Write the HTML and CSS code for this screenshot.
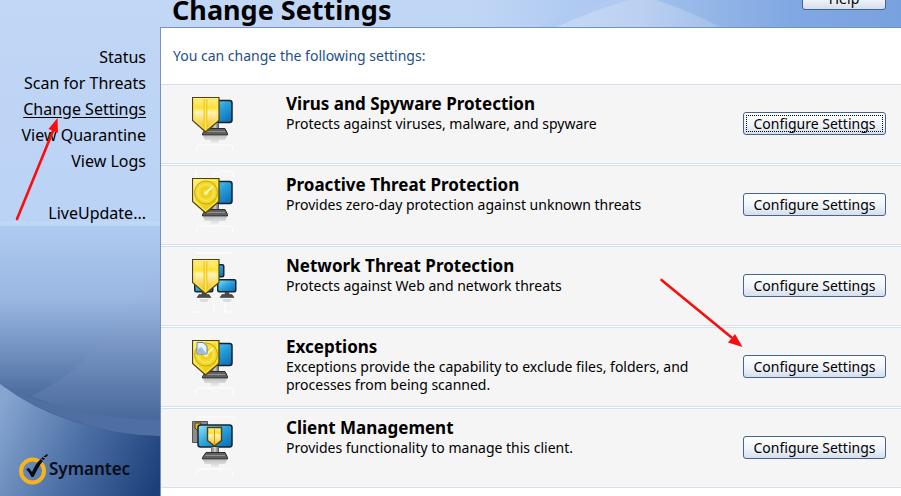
FILE: index.html
```html
<!DOCTYPE html>
<html lang="en">
<head>
<meta charset="utf-8">
<title>Change Settings</title>
<link rel="stylesheet" href="styles.css">
</head>
<body>
<svg class="defs" aria-hidden="true">
  <defs>
    <linearGradient id="gold" x1="0" y1="0" x2="1" y2="1"><stop offset="0" stop-color="#fff3a0"/><stop offset=".45" stop-color="#f6dc2c"/><stop offset="1" stop-color="#e5b800"/></linearGradient>
    <linearGradient id="goldV" x1="0" y1="0" x2="0" y2="1"><stop offset="0" stop-color="#fff0a0"/><stop offset=".3" stop-color="#ffe030"/><stop offset=".42" stop-color="#fff4b8"/><stop offset="1" stop-color="#f0b800"/></linearGradient>
    <linearGradient id="screen" x1="0" y1="0" x2="1" y2="1"><stop offset="0" stop-color="#8fe6fa"/><stop offset=".5" stop-color="#2aa0dc"/><stop offset="1" stop-color="#0968b4"/></linearGradient>
    <linearGradient id="metal" x1="0" y1="0" x2="1" y2="0"><stop offset="0" stop-color="#6c6c6c"/><stop offset=".5" stop-color="#d4d4d4"/><stop offset="1" stop-color="#555"/></linearGradient>
    <linearGradient id="shade" x1="0" y1="0" x2="0" y2="1"><stop offset="0" stop-color="#a0a0a0"/><stop offset="1" stop-color="#f5f5f5"/></linearGradient>
    <g id="stand">
      <path d="M19 33h8v8h-8z" fill="url(#metal)"/>
      <path d="M14 38.500h19l2.500 5v1.500H10.500v-1.500z" fill="#606060" stroke="#2b2b2b"/>
      <path d="M13 41.500h20" stroke="#929292"/>
      <path d="M11 46h24l-2 4h-6v4h-8v-4h-6z" fill="url(#shade)" opacity=".6"/>
      <path d="M4.500 61v-3q0-3 3-3h30q3 0 3 3v3" fill="none" stroke="#fff"/>
    </g>
    <g id="monitor">
      <rect x="10" y="10.500" width="30" height="22" rx="2.500" fill="url(#screen)" stroke="#17232c" stroke-width="1.500"/>
      <use href="#stand"/>
    </g>
    <path id="shield" d="M.5 7.500h26.500v23L13.500 42 .5 30.500z"/>
    <g id="plate">
      <use href="#shield" fill="url(#gold)" stroke="#4b4210" stroke-width="1.200"/>
      <path d="M2.500 9.500h22.500v20.500L13.500 39.500 2.500 30z" fill="none" stroke="#fff06c"/>
    </g>
    <g id="split">
      <use href="#shield" fill="url(#goldV)" stroke="#4b4210" stroke-width="1.200"/>
      <path d="M2.500 9.500H25v20L13.500 39.500l-11-9.500z" fill="none" stroke="#ffe84a"/>
      <path d="M13.500 9v30" stroke="#e6b80c" stroke-width="3.600"/>
      <path d="M13.500 9v30" stroke="#ffe95a" stroke-width="2"/>
    </g>
    <g id="rings" fill="none">
      <circle cx="14" cy="21.500" r="11.500" fill="#f4d829" stroke="#c9a40c"/>
      <circle cx="14" cy="21.500" r="8" stroke="#fbe660" stroke-width="1.200"/>
      <circle cx="14" cy="21.500" r="4.500" stroke="#e6c326" stroke-width="1.200"/>
      <path d="M14 22l7-7" stroke="#fffbd0" stroke-width="1.600"/>
      <circle cx="14" cy="22" r="1.800" fill="#fff8b0"/>
    </g>
    <g id="node">
      <rect x=".75" y=".75" width="18" height="12" rx="1.500" fill="url(#screen)" stroke="#17232c" stroke-width="1.500"/>
      <path d="M8 13.500h4v2h3l2 3H3l2-3h3z" fill="#4b4b4b" stroke="#2b2b2b" stroke-width=".5"/>
      <path d="M5 20h10l-2 3H7z" fill="#ccc" opacity=".6"/>
    </g>
  </defs>
</svg>

<div class="app">
  <nav class="sidebar" aria-label="Main">
    <svg class="backdrop" viewBox="0 0 160 496" preserveAspectRatio="none" aria-hidden="true">
      <defs>
        <linearGradient id="skyTop" x1="0" y1="0" x2="0" y2="1"><stop offset="0" stop-color="#c2d7f5"/><stop offset=".5" stop-color="#bed4f5"/><stop offset="1" stop-color="#bad3f6"/></linearGradient>
        <linearGradient id="sky" gradientUnits="userSpaceOnUse" x1="0" y1="225" x2="0" y2="400"><stop offset="0" stop-color="#afcbf0"/><stop offset=".42" stop-color="#9ab7e2"/><stop offset=".75" stop-color="#6e8dbd"/><stop offset="1" stop-color="#48689d"/></linearGradient>
        <linearGradient id="skyRight" gradientUnits="userSpaceOnUse" x1="0" y1="225" x2="0" y2="425"><stop offset="0" stop-color="#b0ccf2"/><stop offset=".36" stop-color="#9ab6e1"/><stop offset=".7" stop-color="#6b89b9"/><stop offset="1" stop-color="#456599"/></linearGradient>
        <linearGradient id="hill" gradientUnits="userSpaceOnUse" x1="0" y1="410" x2="160" y2="480"><stop offset="0" stop-color="#86a5d0"/><stop offset=".5" stop-color="#4b6fa5"/><stop offset="1" stop-color="#1c3f79"/></linearGradient>
      </defs>
      <path d="M0 0h160v226H0z" fill="url(#skyTop)"/>
      <path d="M0 221h160v5H0z" fill="#c0d8f8"/>
      <path d="M0 226h160v270H0z" fill="url(#sky)"/>
      <path d="M160 265C128 310 88 372 31 396q60 25 129 28z" fill="url(#skyRight)"/>
      <path d="M0 384q70 35 160 36v18Q60 428 0 384z" fill="#4f6fa2"/>
      <path d="M0 384q65 49 160 52v60H0z" fill="url(#hill)"/>
    </svg>
    <ul class="menu">
      <li><a href="#">Status</a></li>
      <li><a href="#">Scan for Threats</a></li>
      <li><a class="current" href="#" aria-current="page">Change Settings</a></li>
      <li><a href="#">View Quarantine</a></li>
      <li><a href="#">View Logs</a></li>
      <li class="update"><a href="#">LiveUpdate...</a></li>
    </ul>
    <div class="brand">
      <svg width="30" height="34" viewBox="0 0 30 34" aria-hidden="true">
        <circle cx="13.500" cy="19" r="11.500" fill="none" stroke="#f9b31c" stroke-width="4"/>
        <path d="M7 17l3-1 3 4Q18 8 28 2l1 1Q21 11 14.500 25h-2Q10 20 7 17z" fill="#080c12"/>
        <path d="M22 7l3 2M24 5l3 1" stroke="#9bb0cc" stroke-width=".8"/>
      </svg>
      <span class="brand-name">Symantec</span><span class="brand-dot">.</span>
    </div>
    <svg class="arrow arrow-menu" width="46" height="106" viewBox="0 0 46 106" aria-hidden="true">
      <path d="M3 103L39 15" stroke="#fa0d0d" stroke-width="2.600" stroke-linecap="round"/>
      <path d="M43.500 2L34.500 13l9.500 4z" fill="#fa0d0d"/>
    </svg>
  </nav>

  <div class="content">
    <header class="header">
      <svg class="backdrop" viewBox="0 0 741 27" preserveAspectRatio="none" aria-hidden="true">
        <defs>
          <linearGradient id="bar"><stop offset="0" stop-color="#c2d7f5"/><stop offset=".42" stop-color="#c0d6f5"/><stop offset=".62" stop-color="#a9c6ef"/><stop offset=".85" stop-color="#81a8e2"/><stop offset="1" stop-color="#78a2df"/></linearGradient>
          <linearGradient id="swoosh"><stop offset="0" stop-color="#c5d9f6"/><stop offset=".5" stop-color="#bcd1f1"/><stop offset="1" stop-color="#a3bfea"/></linearGradient>
        </defs>
        <path d="M0 0h741v27H0z" fill="url(#bar)"/>
        <path d="M380 27Q420 8 450 0h30q-50 10-83 27z" fill="#b0caf1"/>
        <path d="M397 27Q435 9 470 0h26q36 12 64 27z" fill="url(#swoosh)"/>
      </svg>
      <h1>Change Settings</h1>
      <button class="button help" type="button">Help</button>
    </header>
    <main class="panel">
      <p class="intro">You can change the following settings:</p>
      <section class="row">
        <svg class="icon" width="48" height="64" viewBox="0 0 48 64" aria-hidden="true"><use href="#monitor"/><use href="#split"/></svg>
        <div class="text"><h2>Virus and Spyware Protection</h2><p>Protects against viruses, malware, and spyware</p></div>
        <button class="button focused" type="button">Configure Settings</button>
      </section>
      <section class="row">
        <svg class="icon" width="48" height="64" viewBox="0 0 48 64" aria-hidden="true"><path d="M4 6V0M41 6V0H28l-8 6" fill="none" stroke="#fff"/><use href="#monitor"/><use href="#plate"/><use href="#rings"/></svg>
        <div class="text"><h2>Proactive Threat Protection</h2><p>Provides zero-day protection against unknown threats</p></div>
        <button class="button" type="button">Configure Settings</button>
      </section>
      <section class="row">
        <svg class="icon" width="48" height="64" viewBox="0 0 48 64" aria-hidden="true"><path d="M5 1h34M0 60h8M22 50v10M33 50v10h10" fill="none" stroke="#fff"/><use href="#node" x="13" y="12"/><use href="#node" x="2" y="27"/><use href="#node" x="25" y="27"/><use href="#split"/></svg>
        <div class="text"><h2>Network Threat Protection</h2><p>Protects against Web and network threats</p></div>
        <button class="button" type="button">Configure Settings</button>
      </section>
      <section class="row">
        <svg class="icon" width="48" height="64" viewBox="0 0 48 64" aria-hidden="true"><use href="#monitor"/><use href="#plate"/><use href="#rings"/><path d="M5 9.500h6l4 3.500v8H5z" fill="#eaf2fb" stroke="#5d86b7"/><path d="M6 20v-4l3-2 5 6z" fill="#9dbde1"/></svg>
        <div class="text"><h2>Exceptions</h2><p>Exceptions provide the capability to exclude files, folders, and processes from being scanned.</p></div>
        <button class="button" type="button">Configure Settings</button>
      </section>
      <section class="row">
        <svg class="icon" width="48" height="64" viewBox="0 0 48 64" aria-hidden="true"><path d="M5 3h37v5" fill="none" stroke="#fff"/><path d="M.5 7.500h15v21H.5z" fill="#8c8c8c" stroke="#555"/><path d="M3 9h6v5l-3 3-3-3z" fill="#e6bb15" stroke="#4b4210"/><rect x="6" y="11" width="34" height="22" rx="2.500" fill="url(#screen)" stroke="#17232c" stroke-width="1.500"/><use href="#stand"/><path d="M15.500 13.500h14v13l-7 5.500-7-5.500z" fill="url(#goldV)" stroke="#4b4210" stroke-width="1.400"/><path d="M22.500 15v15" stroke="#d79b00"/></svg>
        <div class="text"><h2>Client Management</h2><p>Provides functionality to manage this client.</p></div>
        <button class="button" type="button">Configure Settings</button>
      </section>
      <svg class="arrow arrow-config" width="86" height="74" viewBox="0 0 86 74" aria-hidden="true">
        <path d="M2.500 3L72 60" stroke="#fa0d0d" stroke-width="2.600" stroke-linecap="round"/>
        <path d="M83.500 70L76 57l-7 8.500z" fill="#fa0d0d"/>
      </svg>
    </main>
  </div>
</div>
</body>
</html>
```

FILE: styles.css
```css
* {
  box-sizing: border-box;
}

body {
  margin: 0;
  font-family: "Noto Sans", "Open Sans", sans-serif;
  font-size: 14px;
  line-height: 18px;
  color: #000;
}

h1,
h2,
p,
ul {
  margin: 0;
  padding: 0;
}

.defs {
  position: absolute;
  width: 0;
  height: 0;
}

.app {
  display: grid;
  grid-template-columns: 160px 1fr;
  min-height: 100vh;
  overflow: hidden;
}

.backdrop {
  position: absolute;
  inset: 0;
  width: 100%;
  height: 100%;
  z-index: -1;
}

.sidebar {
  position: relative;
  z-index: 0;
  display: flex;
  flex-direction: column;
  justify-content: space-between;
  padding: 44px 14px 10px 19px;
}

.menu {
  list-style: none;
  text-align: right;
  font-size: 16px;
  line-height: 26px;
}

.menu a {
  color: #000;
  text-decoration: none;
  white-space: nowrap;
}

.menu .current {
  text-decoration: underline;
  text-underline-offset: 2px;
}

.update {
  margin-top: 26px;
}

.brand {
  display: flex;
  align-items: center;
  color: #070c16;
}

.brand-name {
  font-size: 17px;
  font-weight: 600;
}

.brand-dot {
  color: #274a80;
}

.content {
  display: flex;
  flex-direction: column;
  min-width: 0;
}

.header {
  position: relative;
  z-index: 0;
  display: flex;
  align-items: flex-end;
  justify-content: space-between;
  height: 27px;
  padding: 0 15px 0 12px;
}

h1 {
  font-size: 27px;
  line-height: 34px;
}

.panel {
  position: relative;
  flex: 1;
  background: #fff;
  border-top: 1px solid #7591bd;
  border-left: 1px solid #7591bd;
}

.intro {
  padding: 19px 12px;
  color: #1d4f86;
}

.row {
  display: flex;
  align-items: flex-start;
  height: 80px;
  margin-bottom: 1px;
  padding-right: 15px;
  background: #f5f5f5;
  border-top: 1px solid #d3e0ee;
  border-bottom: 1px solid #d3e0ee;
}

.icon {
  flex: none;
  margin: 5px 46px 0 31px;
}

.text {
  flex: 1;
  max-width: 420px;
  padding-top: 10px;
}

h2 {
  margin-bottom: 2px;
  font-size: 17px;
  line-height: 18px;
}

.button {
  height: 23px;
  padding: 0;
  font: inherit;
  color: #000;
  background: linear-gradient(#fff, #f0f4f9 55%, #d5deea);
  border: 1px solid #45648f;
  border-radius: 3px;
}

.row .button {
  flex: none;
  width: 143px;
  margin: 27px 0 0 auto;
}

.help {
  width: 84px;
  margin-bottom: 17px;
}

.focused {
  outline: 1px dotted #000;
  outline-offset: -4px;
}

.arrow {
  position: absolute;
  pointer-events: none;
}

.arrow-menu {
  left: 14px;
  top: 116px;
}

.arrow-config {
  left: 498px;
  top: 249px;
}
```
